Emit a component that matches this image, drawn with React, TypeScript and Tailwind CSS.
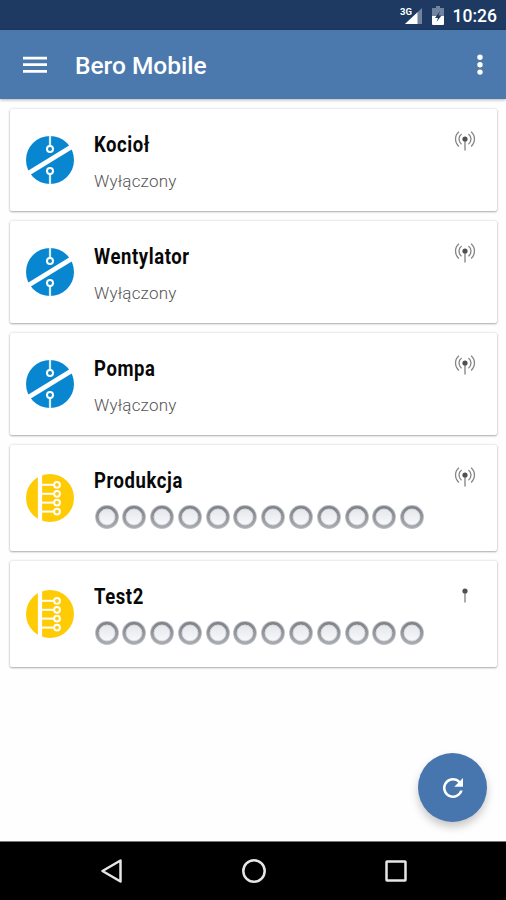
import React from "react";

type Device = {
  name: string;
  kind: "switch" | "inputs";
  online: boolean;
};

const devices: Device[] = [
  { name: "Kocioł", kind: "switch", online: true },
  { name: "Wentylator", kind: "switch", online: true },
  { name: "Pompa", kind: "switch", online: true },
  { name: "Produkcja", kind: "inputs", online: true },
  { name: "Test2", kind: "inputs", online: false },
];

function SwitchIcon() {
  return (
    <svg viewBox="0 0 48 48" className="block size-12">
      <circle cx="24" cy="24" r="24" fill="#0887d0" />
      <path d="M2 37.5 46 10.5" stroke="#fff" strokeWidth="4.8" />
      <path d="M24 0V10M24 38V48" stroke="#d5edfa" strokeWidth="2.2" />
      <circle cx="24" cy="13" r="3" fill="none" stroke="#fff" strokeWidth="2" />
      <circle cx="24" cy="35" r="3" fill="none" stroke="#fff" strokeWidth="2" />
    </svg>
  );
}

function InputsIcon() {
  return (
    <svg viewBox="0 0 48 48" className="block size-12">
      <circle cx="24" cy="24" r="24" fill="#ffcb05" />
      <path d="M14 0V48" stroke="#fff" strokeWidth="4.2" />
      {[10.8, 19.8, 28.6, 37.6].map((y) => (
        <g key={y} fill="none" stroke="#fff" strokeWidth="2">
          <path d={`M15 ${y}H28`} />
          <circle cx="31" cy={y} r="2.9" />
        </g>
      ))}
    </svg>
  );
}

function Antenna({ online }: { online: boolean }) {
  return (
    <svg viewBox="0 0 22 22" className="block size-[22px]" fill="none" stroke="#808080" strokeWidth="1.3">
      {online && (
        <g stroke="#858585" strokeWidth="1.3">
          <path d="M7.600 4A6.300 6.300 0 0 0 7.600 14.200M14.400 4A6.300 6.300 0 0 1 14.400 14.200" />
          <path d="M4.900 1.800A9.600 9.600 0 0 0 4.900 16.400M17.100 1.800A9.600 9.600 0 0 1 17.100 16.400" />
        </g>
      )}
      <path d="M11 10V20.5" />
      <circle cx="11" cy="9" r="2.6" fill="#505050" stroke="none" />
    </svg>
  );
}

function Led() {
  return (
    <svg viewBox="0 0 24 24" className="block size-6">
      <defs>
        <linearGradient id="rim" x1="0" y1="0" x2="0" y2="1">
          <stop offset="0" stopColor="#7f838a" />
          <stop offset="1" stopColor="#a6a9ae" />
        </linearGradient>
        <linearGradient id="lamp" x1="0" y1="0" x2="0" y2="1">
          <stop offset="0" stopColor="#e3e5e9" />
          <stop offset="1" stopColor="#f9fafc" />
        </linearGradient>
      </defs>
      <circle cx="12" cy="12" r="11.9" fill="#bcbec2" />
      <circle cx="12" cy="12" r="9.6" fill="url(#lamp)" stroke="url(#rim)" strokeWidth="2.8" />
      <circle cx="12" cy="12" r="7.900" fill="none" stroke="#d3d5d9" strokeWidth="0.9" />
    </svg>
  );
}

function DeviceCard({ device }: { device: Device }) {
  const isSwitch = device.kind === "switch";
  return (
    <article
      className={`flex rounded-[2px] bg-white pl-4 pr-[21px] shadow-[0_1px_2px_rgba(0,0,0,0.28),0_0_3px_rgba(0,0,0,0.16)] ${
        isSwitch ? "h-[102px]" : "h-[106px]"
      }`}
    >
      <div className={isSwitch ? "pt-[27px]" : "pt-[29px]"}>{isSwitch ? <SwitchIcon /> : <InputsIcon />}</div>
      <div className="ml-5 flex-1 pt-[22px]">
        <h2 className="w-max origin-left scale-x-[0.84] text-[22px] leading-[27px] font-bold tracking-[0.7px] text-[#080808]">
          {device.name}
        </h2>
        {isSwitch ? (
          <p className="mt-3 text-[17px] leading-[22px] font-light tracking-[0.2px] text-[#555]">Wyłączony</p>
        ) : (
          <div className="mt-[11px] ml-[0.5px] flex gap-[3.8px]">
            {Array.from({ length: 12 }, (_, i) => (
              <Led key={i} />
            ))}
          </div>
        )}
      </div>
      <div className="pt-[21px]">
        <Antenna online={device.online} />
      </div>
    </article>
  );
}

export default function App() {
  return (
    <div className="flex h-[900px] w-[506px] flex-col overflow-hidden bg-[#fefefe] font-['Roboto',sans-serif]">
      <div className="flex h-[30px] items-center justify-end bg-[#1e3a63] pr-[9px] text-white">
        <svg viewBox="0 0 23 20" className="mt-0.5 h-5 w-[23px]">
          <path d="M22 2V18H5Z" fill="#71839f" />
          <path d="M17.500 6.200V18H5Z" fill="#fff" />
          <text x="0" y="8.500" fontSize="9.500" fontWeight="700" fill="#fff" textLength="12">3G</text>
        </svg>
        <svg viewBox="0 0 12 19" className="ml-[9px] h-[19px] w-3">
          <path d="M4 0H8V2H12V10H0V2H4Z" fill="#71839f" />
          <path d="M0 10H12V18Q12 19 11 19H1Q0 19 0 18Z" fill="#fff" />
          <path d="M8 5 3 12H6L4.5 16 9.5 9.5H6.5Z" fill="#1e3a63" />
        </svg>
        <span className="mt-0.5 ml-[9px] text-[17.5px] leading-5 font-medium">10:26</span>
      </div>

      <header className="z-10 flex h-[69px] shrink-0 items-center bg-[#4b79ae] pr-[23.500px] pl-[23px] text-white shadow-[0_1px_3px_rgba(0,0,0,0.3)]">
        <svg viewBox="0 0 24 18" className="h-[18px] w-6" fill="#fff">
          <path d="M0 0.700H24V3.500H0ZM0 7.300H24V10.100H0ZM0 13.900H24V16.700H0Z" />
        </svg>
        <h1 className="mt-0.5 ml-7 flex-1 text-[24.5px] leading-8 font-medium">Bero Mobile</h1>
        <svg viewBox="0 0 6 22" className="h-[22px] w-1.5" fill="#fff">
          <circle cx="3" cy="3.300" r="2.7" />
          <circle cx="3" cy="10.700" r="2.7" />
          <circle cx="3" cy="18.100" r="2.7" />
        </svg>
      </header>

      <main className="flex flex-1 flex-col gap-2.5 pt-2.5 pr-[9px] pl-2.5">
        {devices.map((device) => (
          <DeviceCard key={device.name} device={device} />
        ))}
        <button className="mt-auto mr-[10px] mb-[19px] flex size-[69px] items-center justify-center self-end rounded-full bg-[#4676ad] shadow-[0_5px_9px_rgba(0,0,0,0.22)]">
          <svg viewBox="0 0 24 24" className="size-[30px]" fill="#fff">
            <path d="M17.65 6.35A8 8 0 1 0 19.73 14H17.650A6 6 0 1 1 12 6C13.66 6 15.140 6.690 16.220 7.780L13 11H20V4Z" />
          </svg>
        </button>
      </main>

      <nav className="flex h-[59px] shrink-0 items-center justify-between border-t border-[#777] bg-black pr-[99px] pl-[101px]">
        <svg viewBox="0 0 21 24" className="h-6 w-[21px]" fill="none" stroke="#e6e6e6" strokeWidth="2.5" strokeLinejoin="round">
          <path d="M19.500 1.500V22.500L1.500 12Z" />
        </svg>
        <svg viewBox="0 0 24 24" className="size-6" fill="none" stroke="#e6e6e6" strokeWidth="2.5">
          <circle cx="12" cy="12" r="10.7" />
        </svg>
        <svg viewBox="0 0 22 22" className="size-[22px]" fill="none" stroke="#e6e6e6" strokeWidth="2.500">
          <rect x="1.500" y="1.500" width="19" height="19" rx="0.5" />
        </svg>
      </nav>
    </div>
  );
}
